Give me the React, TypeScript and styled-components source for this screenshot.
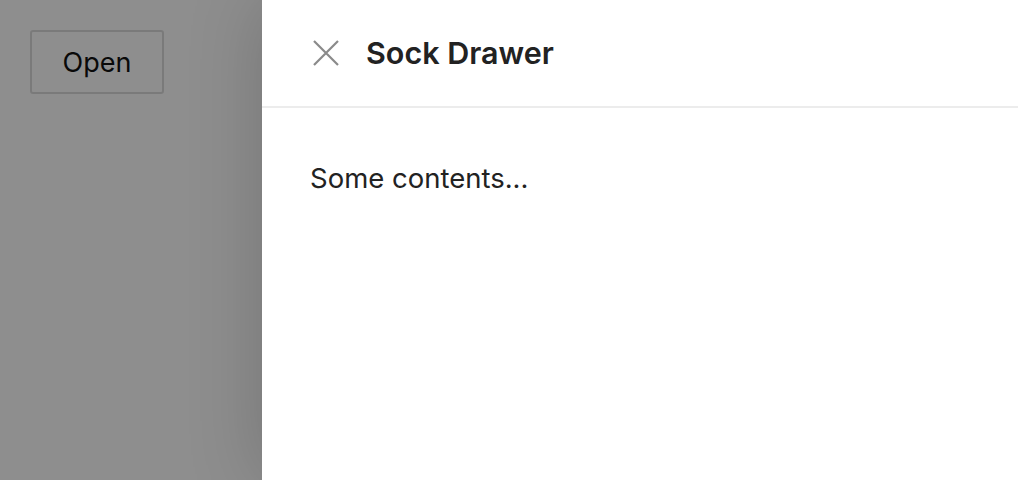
import React from "react";
import styled, { createGlobalStyle } from "styled-components";

const Global = createGlobalStyle`
  html, body { margin: 0; padding: 0; height: 100%; }
  body { font-family: Inter, "Noto Sans", sans-serif; background: #fff; color: #222; overflow: hidden; }
  #root { height: 100%; }
`;

const Page = styled.div`
  position: relative;
  width: 1018px;
  height: 480px;
  padding: 30px;
  box-sizing: border-box;
`;

const OpenButton = styled.button`
  width: 134px;
  height: 64px;
  font-family: Inter, "Noto Sans", sans-serif;
  font-size: 27px;
  color: #111;
  background: transparent;
  border: 2px solid #dcdcdc;
  border-radius: 3px;
  padding: 0;
  cursor: pointer;
`;

const Overlay = styled.div`
  position: absolute;
  inset: 0;
  background: rgba(0, 0, 0, 0.443);
  display: flex;
  justify-content: flex-end;
`;

const Drawer = styled.aside`
  width: 756px;
  height: 100%;
  background: #fff;
  box-shadow: 0 0 70px rgba(0, 0, 0, 0.18);
  display: flex;
  flex-direction: column;
`;

const Header = styled.header`
  height: 106px;
  border-bottom: 2px solid #ececec;
  display: flex;
  align-items: center;
  padding-left: 50px;
  gap: 26px;
`;

const CloseButton = styled.button`
  width: 28px;
  height: 28px;
  padding: 0;
  border: none;
  background: transparent;
  display: flex;
  align-items: center;
  justify-content: center;
  cursor: pointer;
`;

const Title = styled.h2`
  margin: -2px 0 0;
  font-size: 30.5px;
  font-weight: 600;
  color: #222;
`;

const Body = styled.div`
  padding: 53px 48px;
  font-size: 27.5px;
  color: #222;
`;

export default function App() {
  return (
    <>
      <Global />
      <Page>
        <OpenButton>Open</OpenButton>
        <Overlay>
          <Drawer>
            <Header>
              <CloseButton aria-label="Close">
                <svg width="28" height="28" viewBox="0 0 28 28">
                  <path d="M2 2 L26 26 M26 2 L2 26" stroke="#8a8a8a" strokeWidth="2.2" fill="none" />
                </svg>
              </CloseButton>
              <Title>Sock Drawer</Title>
            </Header>
            <Body>Some contents...</Body>
          </Drawer>
        </Overlay>
      </Page>
    </>
  );
}
